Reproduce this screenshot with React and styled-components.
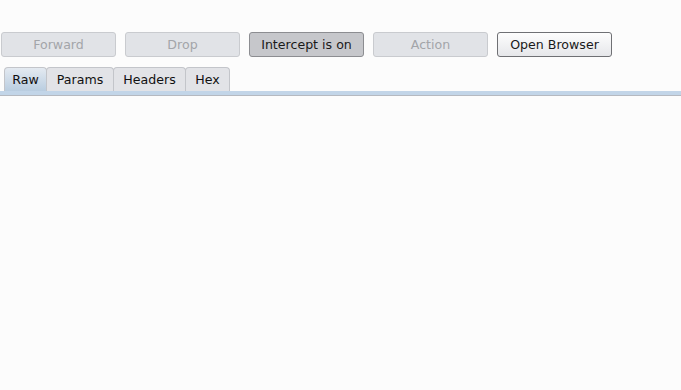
import React, { useState } from "react";
import styled, { createGlobalStyle } from "styled-components";

const GlobalStyle = createGlobalStyle`
  html, body {
    margin: 0;
    padding: 0;
    background: #fcfcfc;
    font-family: "DejaVu Sans", "Liberation Sans", sans-serif;
  }
`;

const Page = styled.div`
  width: 681px;
  height: 390px;
  background: #fcfcfc;
  display: flex;
  flex-direction: column;
`;

const Toolbar = styled.div`
  display: flex;
  gap: 9px;
  padding: 32px 0 0 1px;
`;

const Button = styled.button`
  width: 115px;
  height: 25px;
  box-sizing: border-box;
  border-radius: 3px;
  font-family: "DejaVu Sans", sans-serif;
  font-size: 12.6px;
  padding: 0;
  border: 1px solid ${(p) => (p.$variant === "on" ? "#8c8d91" : p.$variant === "normal" ? "#6f7074" : "#c9cbcf")};
  color: ${(p) => (p.$variant === "disabled" ? "#a3a5a9" : "#1a1a1a")};
  background: ${(p) =>
    p.$variant === "on"
      ? "#c6c7cb"
      : p.$variant === "normal"
      ? "linear-gradient(#fdfdfd, #e6e7ea)"
      : "#e1e3e7"};
`;

const TabBar = styled.div`
  display: flex;
  padding: 10px 0 0 4px;
`;

const Tab = styled.div`
  width: ${(p) => p.$w}px;
  height: 24px;
  box-sizing: border-box;
  display: flex;
  align-items: center;
  justify-content: center;
  font-size: 12.6px;
  color: #111;
  border: 1px solid #c3c5ca;
  border-bottom: none;
  margin-left: -1px;
  border-radius: 4px 4px 0 0;
  background: ${(p) => (p.$active ? "linear-gradient(#e4eaf1, #b9cde0)" : "#e2e3e7")};
  &:first-child {
    margin-left: 0;
  }
`;

const Divider = styled.div`
  height: 4px;
  background: #c2d5e8;
  border-bottom: 1px solid #b5b9c0;
`;

const Content = styled.div`
  flex: 1;
  background: #fcfcfc;
`;

export default function App() {
  const [tab, setTab] = useState("Raw");
  const tabs = [
    ["Raw", 43],
    ["Params", 68],
    ["Headers", 73],
    ["Hex", 45],
  ];
  return (
    <Page>
      <GlobalStyle />
      <Toolbar>
        <Button $variant="disabled">Forward</Button>
        <Button $variant="disabled">Drop</Button>
        <Button $variant="on">Intercept is on</Button>
        <Button $variant="disabled">Action</Button>
        <Button $variant="normal">Open Browser</Button>
      </Toolbar>
      <TabBar>
        {tabs.map(([name, w]) => (
          <Tab key={name} $w={w} $active={tab === name} onClick={() => setTab(name)}>
            {name}
          </Tab>
        ))}
      </TabBar>
      <Divider />
      <Content />
    </Page>
  );
}
